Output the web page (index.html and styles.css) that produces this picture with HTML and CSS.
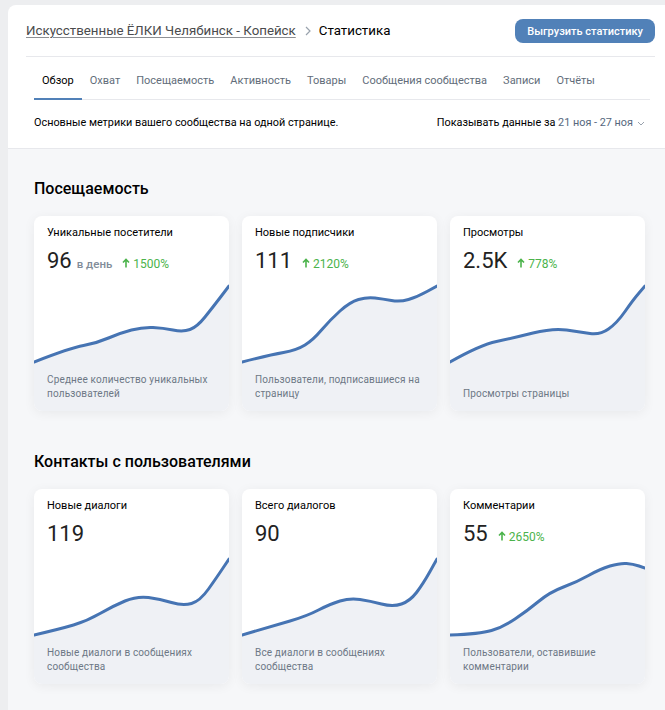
FILE: index.html
```html
<!DOCTYPE html>
<html lang="ru">
<head>
<meta charset="utf-8">
<title>Статистика</title>
<link rel="stylesheet" href="styles.css">
</head>
<body>
<div class="panel">
  <header class="topbar">
    <nav class="crumbs">
      <a class="crumb-link" href="#">Искусственные ЁЛКИ Челябинск - Копейск</a>
      <svg class="crumb-sep" width="6" height="10" viewBox="0 0 6 10"><path d="M1 1 L5 5 L1 9" fill="none" stroke="#99a2ad" stroke-width="1.2"/></svg>
      <span class="crumb-current">Статистика</span>
    </nav>
    <button class="export">Выгрузить статистику</button>
  </header>

  <nav class="tabs">
    <a class="tab active" href="#">Обзор</a>
    <a class="tab" href="#">Охват</a>
    <a class="tab" href="#">Посещаемость</a>
    <a class="tab" href="#">Активность</a>
    <a class="tab" href="#">Товары</a>
    <a class="tab" href="#">Сообщения сообщества</a>
    <a class="tab" href="#">Записи</a>
    <a class="tab" href="#">Отчёты</a>
  </nav>

  <div class="intro">
    <span>Основные метрики вашего сообщества на одной странице.</span>
    <span class="period">Показывать данные за <span class="dates">21 ноя - 27 ноя</span><svg class="period-chev" width="8" height="5" viewBox="0 0 8 5"><path d="M1 1 L4 4 L7 1" fill="none" stroke="#99a2ad" stroke-width="1"/></svg></span>
  </div>

  <main class="content">
    <section class="group">
      <h2>Посещаемость</h2>
      <div class="cards">
        <article class="card">
          <div class="card-head">
            <div class="card-title">Уникальные посетители</div>
            <div class="value-row"><span class="num">96</span><span class="unit">в день</span><span class="change"><svg width="8" height="10" viewBox="0 0 8 10"><path d="M4 9.5 V1.5 M1 4.5 L4 1.5 L7 4.5" fill="none" stroke="#4bb34b" stroke-width="1.6"/></svg>1500%</span></div>
          </div>
          <svg class="chart" viewBox="0 0 195 90" preserveAspectRatio="none">
            <path class="area" d="M0,86 Q36,72 49.5,69.5 Q63,67 74.5,62 Q86,57 97.5,54 Q109,51 119,51.5 Q129,52 139,54 Q149,56 156,53.5 Q163,51 171,41 Q179,31 187,20.5 L195,10 L195,90 L0,90 Z"/>
            <path class="line" d="M0,86 Q36,72 49.5,69.5 Q63,67 74.5,62 Q86,57 97.5,54 Q109,51 119,51.5 Q129,52 139,54 Q149,56 156,53.5 Q163,51 171,41 Q179,31 187,20.5 L195,10"/>
          </svg>
          <div class="card-desc">Среднее количество уникальных пользователей</div>
        </article>

        <article class="card">
          <div class="card-head">
            <div class="card-title">Новые подписчики</div>
            <div class="value-row"><span class="num">111</span><span class="change"><svg width="8" height="10" viewBox="0 0 8 10"><path d="M4 9.5 V1.5 M1 4.5 L4 1.5 L7 4.5" fill="none" stroke="#4bb34b" stroke-width="1.6"/></svg>2120%</span></div>
          </div>
          <svg class="chart" viewBox="0 0 195 90" preserveAspectRatio="none">
            <path class="area" d="M0,86 Q28,79 41.5,76.5 Q55,74 63,69 Q71,64 79.5,54 Q88,44 98,35 Q108,26 116.5,23.5 Q125,21 133,22 Q141,23 149.5,24.5 Q158,26 166.5,23.5 Q175,21 185,15.5 L195,10 L195,90 L0,90 Z"/>
            <path class="line" d="M0,86 Q28,79 41.5,76.5 Q55,74 63,69 Q71,64 79.5,54 Q88,44 98,35 Q108,26 116.5,23.5 Q125,21 133,22 Q141,23 149.5,24.5 Q158,26 166.5,23.5 Q175,21 185,15.5 L195,10"/>
          </svg>
          <div class="card-desc">Пользователи, подписавшиеся на страницу</div>
        </article>

        <article class="card">
          <div class="card-head">
            <div class="card-title">Просмотры</div>
            <div class="value-row"><span class="num">2.5K</span><span class="change"><svg width="8" height="10" viewBox="0 0 8 10"><path d="M4 9.5 V1.5 M1 4.5 L4 1.5 L7 4.5" fill="none" stroke="#4bb34b" stroke-width="1.6"/></svg>778%</span></div>
          </div>
          <svg class="chart" viewBox="0 0 195 90" preserveAspectRatio="none">
            <path class="area" d="M0,86 Q30,69 46.5,65.5 Q63,62 83,57 Q103,52 116.5,54 Q130,56 140,57.5 Q150,59 158.5,53 Q167,47 175,35.5 Q183,24 189,17 L195,10 L195,90 L0,90 Z"/>
            <path class="line" d="M0,86 Q30,69 46.5,65.5 Q63,62 83,57 Q103,52 116.5,54 Q130,56 140,57.5 Q150,59 158.5,53 Q167,47 175,35.5 Q183,24 189,17 L195,10"/>
          </svg>
          <div class="card-desc">Просмотры страницы</div>
        </article>
      </div>
    </section>

    <section class="group">
      <h2>Контакты с пользователями</h2>
      <div class="cards">
        <article class="card">
          <div class="card-head">
            <div class="card-title">Новые диалоги</div>
            <div class="value-row"><span class="num">119</span></div>
          </div>
          <svg class="chart" viewBox="0 0 195 90" preserveAspectRatio="none">
            <path class="area" d="M0,86 Q26,80 39.5,76 Q53,72 66,64.5 Q79,57 91,52 Q103,47 114.5,48.5 Q126,50 137.5,53.5 Q149,57 157.5,54.5 Q166,52 174.5,40 Q183,28 189,19 L195,10 L195,90 L0,90 Z"/>
            <path class="line" d="M0,86 Q26,80 39.5,76 Q53,72 66,64.5 Q79,57 91,52 Q103,47 114.5,48.5 Q126,50 137.5,53.5 Q149,57 157.5,54.5 Q166,52 174.5,40 Q183,28 189,19 L195,10"/>
          </svg>
          <div class="card-desc">Новые диалоги в сообщениях сообщества</div>
        </article>

        <article class="card">
          <div class="card-head">
            <div class="card-title">Всего диалогов</div>
            <div class="value-row"><span class="num">90</span></div>
          </div>
          <svg class="chart" viewBox="0 0 195 90" preserveAspectRatio="none">
            <path class="area" d="M0,86 Q31,77 48,72 Q65,67 76.5,61 Q88,55 98,52 Q108,49 118,50.5 Q128,52 139.5,55 Q151,58 159.5,55 Q168,52 174.5,43.5 Q181,35 188,22.5 L195,10 L195,90 L0,90 Z"/>
            <path class="line" d="M0,86 Q31,77 48,72 Q65,67 76.5,61 Q88,55 98,52 Q108,49 118,50.5 Q128,52 139.5,55 Q151,58 159.5,55 Q168,52 174.5,43.5 Q181,35 188,22.5 L195,10"/>
          </svg>
          <div class="card-desc">Все диалоги в сообщениях сообщества</div>
        </article>

        <article class="card">
          <div class="card-head">
            <div class="card-title">Комментарии</div>
            <div class="value-row"><span class="num">55</span><span class="change"><svg width="8" height="10" viewBox="0 0 8 10"><path d="M4 9.5 V1.5 M1 4.5 L4 1.5 L7 4.5" fill="none" stroke="#4bb34b" stroke-width="1.6"/></svg>2650%</span></div>
          </div>
          <svg class="chart" viewBox="0 0 195 90" preserveAspectRatio="none">
            <path class="area" d="M0,86 Q30,85 41.5,81.5 Q53,78 65,70 Q77,62 88.5,52.5 Q100,43 113.5,38 Q127,33 138.5,26.5 Q150,20 160,17 Q170,14 176.5,14.5 Q183,15 189,17 L195,19 L195,90 L0,90 Z"/>
            <path class="line" d="M0,86 Q30,85 41.5,81.5 Q53,78 65,70 Q77,62 88.5,52.5 Q100,43 113.5,38 Q127,33 138.5,26.5 Q150,20 160,17 Q170,14 176.5,14.5 Q183,15 189,17 L195,19"/>
          </svg>
          <div class="card-desc">Пользователи, оставившие комментарии</div>
        </article>
      </div>
    </section>
  </main>
</div>
</body>
</html>
```

FILE: styles.css
```css
html, body {
  margin: 0;
  background: #edeef0;
  overflow: hidden;
}

body {
  font-family: Roboto, "Noto Sans", sans-serif;
  color: #000;
}

.panel {
  margin: 5px 0 0 8px;
  min-height: 705px;
  background: #fff;
  border-radius: 8px 0 0 0;
  display: flex;
  flex-direction: column;
}

/* header */
.topbar {
  display: flex;
  align-items: center;
  justify-content: space-between;
  margin: 0 10px 0 18px;
  padding: 14px 0 13px;
  border-bottom: 1px solid #e7e8ec;
}

.crumbs {
  display: flex;
  align-items: center;
  font-size: 13.3px;
  line-height: 18px;
}

.crumb-link {
  color: #4a4b4d;
  text-decoration: underline;
  text-decoration-color: #8d8f93;
  text-underline-offset: 2px;
}

.crumb-sep {
  margin: 0 8px 0 9px;
}

.crumb-current {
  color: #000;
}

.export {
  height: 24px;
  padding: 0 12px;
  border: none;
  border-radius: 8px;
  background: #5181b8;
  color: #fff;
  font-family: Roboto, "Noto Sans", sans-serif;
  font-size: 11px;
  font-weight: 500;
}

/* tabs */
.tabs {
  display: flex;
  margin: 0 15px 0 26px;
  border-bottom: 1px solid #e7e8ec;
}

.tab {
  padding: 16px 8px 10px;
  font-size: 11px;
  line-height: 15px;
  color: #626d7a;
  text-decoration: none;
  border-bottom: 2px solid transparent;
  margin-bottom: -1px;
}

.tab.active {
  color: #000;
  border-bottom-color: #5181b8;
}

/* intro row */
.intro {
  display: flex;
  justify-content: space-between;
  align-items: center;
  padding: 15px 20px 17px 26px;
  font-size: 10.85px;
  line-height: 16px;
  color: #000;
  border-bottom: 1px solid #e7e8ec;
}

.period {
  display: flex;
  align-items: center;
  white-space: pre;
}

.dates {
  color: #55677d;
}

.period-chev {
  margin-left: 4px;
}

/* content */
.content {
  flex: 1;
  background: #f6f7f9;
  padding: 30px 20px 27px 26px;
}

.group + .group {
  margin-top: 41px;
}

.group h2 {
  margin: 0 0 17px;
  font-size: 16px;
  line-height: 20px;
  font-weight: 500;
  color: #000;
}

.cards {
  display: grid;
  grid-template-columns: repeat(3, 195px);
  gap: 13px;
}

.card {
  height: 195px;
  background: #fff;
  border-radius: 8px;
  overflow: hidden;
  box-shadow: 0 2px 12px rgba(0, 0, 0, 0.06);
  display: flex;
  flex-direction: column;
}

.card-head {
  height: 60px;
  box-sizing: border-box;
  padding: 9px 13px 0;
}

.card-title {
  font-size: 11px;
  line-height: 16px;
  color: #000;
}

.value-row {
  display: flex;
  align-items: baseline;
  margin-top: 6px;
  line-height: 28px;
}

.num {
  font-size: 22px;
  color: #222;
}

.unit {
  margin-left: 5px;
  font-size: 11.5px;
  font-weight: 500;
  color: #818c99;
}

.change {
  margin-left: 10px;
  font-size: 12px;
  color: #4bb34b;
}

.change svg {
  margin-right: 3px;
}

.chart {
  display: block;
  width: 195px;
  height: 90px;
}

.area {
  fill: #eff1f5;
}

.line {
  fill: none;
  stroke: #4674b3;
  stroke-width: 3;
  stroke-linecap: round;
}

.card-desc {
  flex: 1;
  display: flex;
  flex-direction: column;
  justify-content: flex-end;
  padding: 0 12px 10px 13px;
  background: #eff1f5;
  font-size: 10px;
  line-height: 14px;
  letter-spacing: 0.15px;
  color: #6d7885;
}
```
